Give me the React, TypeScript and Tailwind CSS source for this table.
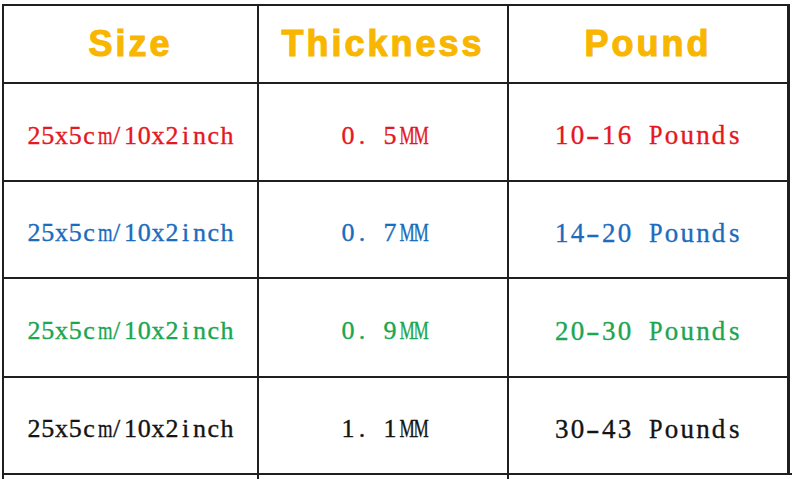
const rows = [
  { size: '25x5cm/10x2inch', thick: '0. 5MM', pound: '10-16 Pounds', color: 'text-[#e5171f]' },
  { size: '25x5cm/10x2inch', thick: '0. 7MM', pound: '14-20 Pounds', color: 'text-[#1b6cbd]' },
  { size: '25x5cm/10x2inch', thick: '0. 9MM', pound: '20-30 Pounds', color: 'text-[#1ba650]' },
  { size: '25x5cm/10x2inch', thick: '1. 1MM', pound: '30-43 Pounds', color: 'text-[#141414]' },
]

const heights = ['h-[96px]', 'h-[95px]', 'h-[97px]', 'h-[95px]']

// narrow the wide serif letters so every glyph sits in a half-width cell, like SimSun
const squeeze: Record<string, string> = {
  m: 'scale-x-[0.72]',
  M: 'scale-x-[0.66]',
  P: 'scale-x-[0.9]',
  '-': 'scale-x-[1.5]',
}

function Mono({ text, cell }: { text: string; cell: string }) {
  return (
    <span className="inline-flex whitespace-pre">
      {text.split('').map((ch, i) => (
        <span key={i} className={`inline-block text-center ${cell} ${squeeze[ch] ?? ''}`}>
          {ch}
        </span>
      ))}
    </span>
  )
}

const headCell =
  'flex h-[76px] items-center justify-center bg-white font-["Liberation_Sans",Arial,sans-serif] text-[36px] font-bold tracking-[3px] text-[#f8b600] [-webkit-text-stroke:1.1px_#f8b600]'
const bodyCell =
  'flex items-center justify-center bg-white pt-[7px] leading-none font-["Liberation_Serif","Times_New_Roman",serif] [-webkit-text-stroke:0.35px_currentColor]'

export default function App() {
  return (
    <div className="min-h-[479px] w-[800px] overflow-hidden bg-white pl-[2px] pt-[4px]">
      <div className="grid w-[788px] grid-cols-[253px_248px_278px] gap-[2px] bg-[#1f1f1f] p-[2px] pb-0">
        <div className={headCell}>Size</div>
        <div className={headCell}>Thickness</div>
        <div className={headCell}>Pound</div>
        {rows.map((row, i) => (
          <div key={i} className="contents">
            <div className={`${bodyCell} ${heights[i]} ${row.color} text-[26px]`}>
              <Mono text={row.size} cell="w-[13.8px]" />
            </div>
            <div className={`${bodyCell} ${heights[i]} ${row.color} text-[26px]`}>
              <Mono text={row.thick} cell="w-[14px]" />
            </div>
            <div className={`${bodyCell} ${heights[i]} ${row.color} text-[27px]`}>
              <Mono text={row.pound} cell="w-[15.7px]" />
            </div>
          </div>
        ))}
      </div>
      <div className="grid w-[790px] grid-cols-[253px_248px_285px] gap-[2px] bg-[#1f1f1f] pl-[2px] pt-[2px]">
        <div className="h-[40px] bg-white" />
        <div className="h-[40px] bg-white" />
        <div className="h-[40px] bg-white" />
      </div>
    </div>
  )
}
